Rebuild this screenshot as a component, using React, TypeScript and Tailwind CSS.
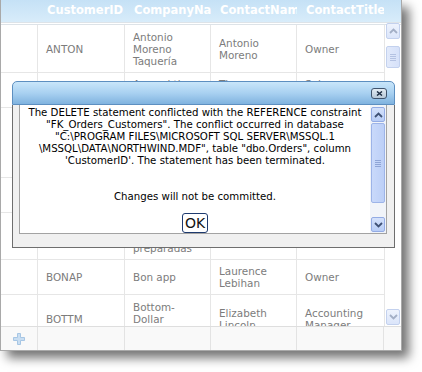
import React from 'react';

const rows = [
    { id: 'ANTON', company: ['Antonio', 'Moreno', 'Taquería'], contact: ['Antonio', 'Moreno'], title: ['Owner'], h: 'h-[48px]' },
    { id: 'AROUT', company: ['Around the', 'Horn'], contact: ['Thomas', 'Hardy'], title: ['Sales', 'Representative'], h: 'h-[35px]' },
    { id: 'BERGS', company: ['Berglunds', 'snabbköp'], contact: ['Christina', 'Berglund'], title: ['Order', 'Administrator'], h: 'h-[70px]' },
    { id: 'BLAUS', company: ['Blauer See', 'Delikatessen'], contact: ['Hanna', 'Moos'], title: ['Sales', 'Representative'], h: 'h-[35px]' },
    { id: 'BOLID', company: ['Bólido', 'Comidas', 'preparadas'], contact: ['Martín', 'Sommer'], title: ['Owner'], h: 'h-[47px]' },
    { id: 'BONAP', company: ['Bon app'], contact: ['Laurence', 'Lebihan'], title: ['Owner'], h: 'h-[35px]' },
    { id: 'BOTTM', company: ['Bottom-', 'Dollar', 'Markets'], contact: ['Elizabeth', 'Lincoln'], title: ['Accounting', 'Manager'], h: 'h-[48px]' },
];

const message = [
    'The DELETE statement conflicted with the REFERENCE constraint',
    '"FK_Orders_Customers". The conflict occurred in database',
    '"C:\\PROGRAM FILES\\MICROSOFT SQL SERVER\\MSSQL.1',
    '\\MSSQL\\DATA\\NORTHWIND.MDF", table "dbo.Orders", column',
    "'CustomerID'. The statement has been terminated.",
];

function Chevron({ up, color }: { up?: boolean; color: string }) {
    return (
        <svg width="9" height="6" viewBox="0 0 9 6">
            <path d={up ? 'M1 5 L4.5 1.5 L8 5' : 'M1 1 L4.5 4.5 L8 1'} fill="none" stroke={color} strokeWidth="1.8" />
        </svg>
    );
}

function Lines({ items }: { items: string[] }) {
    return (
        <div>
            {items.map((t) => (
                <div key={t} className="whitespace-nowrap">{t}</div>
            ))}
        </div>
    );
}

export default function App() {
    return (
        <div className="relative w-[422px] h-[372px] bg-white overflow-hidden font-['DejaVu_Sans',Verdana,sans-serif]">
            {/* Grid */}
            <div className="w-[402px] h-[351px] border-x border-b border-[#a9a9a9] bg-white flex flex-col shadow-[7px_7px_10px_rgba(0,0,0,0.55)]">
                <div className="h-[22px] shrink-0 flex items-center bg-gradient-to-b from-[#c5e1f6] to-[#d8ecfa] text-white font-bold text-[11.5px]">
                    <div className="w-[37px] shrink-0" />
                    <div className="w-[87px] shrink-0 pl-[9px] overflow-hidden whitespace-nowrap">CustomerID</div>
                    <div className="w-[86px] shrink-0 pl-[9px] overflow-hidden whitespace-nowrap">CompanyName</div>
                    <div className="w-[86px] shrink-0 pl-[9px] overflow-hidden whitespace-nowrap">ContactName</div>
                    <div className="w-[87px] shrink-0 pl-[9px] overflow-hidden whitespace-nowrap">ContactTitle</div>
                </div>
                <div className="h-[3px] shrink-0 border-t border-b border-[#dde3e8] bg-white" />

                <div className="h-[301px] shrink-0 flex">
                    <div className="w-[383px] overflow-hidden text-[10.4px] leading-[12px] text-[#7c7c7c]">
                        {rows.map((r) => (
                            <div key={r.id} className={`${r.h} flex border-b border-[#e6e6e6]`}>
                                <div className="w-[36px] shrink-0" />
                                <div className="w-[87px] shrink-0 border-l border-[#e6e6e6] pl-[8px] flex items-center">{r.id}</div>
                                <div className="w-[86px] shrink-0 border-l border-[#e6e6e6] pl-[8px] flex items-center"><Lines items={r.company} /></div>
                                <div className="w-[86px] shrink-0 border-l border-[#e6e6e6] pl-[8px] flex items-center"><Lines items={r.contact} /></div>
                                <div className="w-[87px] shrink-0 border-l border-[#e6e6e6] pl-[8px] flex items-center"><Lines items={r.title} /></div>
                            </div>
                        ))}
                    </div>
                    <div className="w-[17px] shrink-0 border-l border-[#e6e6e6] bg-white flex flex-col items-center">
                        <div className="w-[14px] h-[16px] mt-[-2px] rounded-[2px] border border-[#c3d1ee] bg-gradient-to-b from-[#eef3fd] to-[#dbe5fa] flex items-center justify-center">
                            <Chevron up color="#a3afc6" />
                        </div>
                        <div className="w-[14px] h-[22px] mt-[7px] rounded-[2px] border border-[#c3d1ee] bg-gradient-to-r from-[#e2eafb] to-[#d6e1f9] flex flex-col items-center justify-center gap-[1px]">
                            <div className="w-[6px] h-px bg-[#b4c2e2]" />
                            <div className="w-[6px] h-px bg-[#b4c2e2]" />
                            <div className="w-[6px] h-px bg-[#b4c2e2]" />
                            <div className="w-[6px] h-px bg-[#b4c2e2]" />
                        </div>
                        <div className="flex-1" />
                        <div className="w-[14px] h-[16px] mb-[1px] rounded-[2px] border border-[#c3d1ee] bg-gradient-to-b from-[#eef3fd] to-[#dbe5fa] flex items-center justify-center">
                            <Chevron color="#a3afc6" />
                        </div>
                    </div>
                </div>

                <div className="flex-1 flex border-t border-[#dedede] bg-[#f9f9f9]">
                    <div className="w-[36px] shrink-0 flex items-center justify-center">
                        <svg width="12" height="12" viewBox="0 0 12 12">
                            <path d="M4.5 0.5 H7.5 V4.5 H11.5 V7.5 H7.5 V11.5 H4.5 V7.5 H0.5 V4.5 H4.5 Z" fill="#c9def2" stroke="#a7c6e4" strokeWidth="1" />
                        </svg>
                    </div>
                    <div className="w-[87px] shrink-0 border-l border-[#e3e3e3]" />
                    <div className="w-[86px] shrink-0 border-l border-[#e3e3e3]" />
                    <div className="w-[86px] shrink-0 border-l border-[#e3e3e3]" />
                    <div className="w-[87px] shrink-0 border-l border-[#e3e3e3]" />
                    <div className="flex-1 border-l border-[#e3e3e3]" />
                </div>
            </div>

            {/* Error dialog */}
            <div className="absolute left-[12px] top-[81px] w-[383px] h-[160px] flex flex-col">
                <div className="h-[24px] shrink-0 rounded-t-[5px] border border-[#5d8fc0] bg-gradient-to-b from-[#c9e6fa] via-[#a9d1f1] to-[#80b3df] flex items-center justify-end pr-[7px]">
                    <div className="w-[16px] h-[11px] rounded-[3px] border border-[#3f536d] bg-gradient-to-b from-[#e3ecf4] to-[#b7c8d8] flex items-center justify-center">
                        <svg width="7" height="5" viewBox="0 0 7 5">
                            <path d="M1 0.5 L6 4.5 M6 0.5 L1 4.5" stroke="#1f2f45" strokeWidth="1.5" />
                        </svg>
                    </div>
                </div>
                <div className="flex-1 bg-[#f0f0f0] border-x border-b border-[#6e6e6e] pl-[6px] pr-[7px] pb-[13px]">
                    <div className="h-full bg-white border border-[#a3a3a3] border-t-0 flex">
                        <div className="flex-1 overflow-hidden text-black text-[10.2px] leading-[12px] text-center pt-[2px]">
                            {message.map((l) => (
                                <div key={l} className="whitespace-nowrap">{l}</div>
                            ))}
                            <div className="h-[24px]" />
                            <div>Changes will not be committed.</div>
                            <div className="mt-[10px] flex justify-center">
                                <div className="w-[26px] h-[20px] rounded-[3px] border border-[#1e3a6e] text-[14px] leading-[18px] text-[#111]">OK</div>
                            </div>
                        </div>
                        <div className="w-[16px] shrink-0 bg-[#f1f4f9] flex flex-col items-center pt-[2px]">
                            <div className="w-[14px] h-[15px] rounded-[2px] border border-[#93abe4] bg-gradient-to-b from-[#d4e1fb] to-[#b8cdf6] flex items-center justify-center">
                                <Chevron up color="#3f5175" />
                            </div>
                            <div className="w-[14px] h-[80px] mt-[1px] rounded-[2px] border border-[#9db4e8] bg-gradient-to-r from-[#c9d9fa] to-[#bccff7] flex flex-col items-center justify-center gap-[1px]">
                                <div className="w-[6px] h-px bg-[#8fa5d6]" />
                                <div className="w-[6px] h-px bg-[#8fa5d6]" />
                                <div className="w-[6px] h-px bg-[#8fa5d6]" />
                                <div className="w-[6px] h-px bg-[#8fa5d6]" />
                            </div>
                            <div className="flex-1" />
                            <div className="w-[14px] h-[15px] mb-[1px] rounded-[2px] border border-[#93abe4] bg-gradient-to-b from-[#d4e1fb] to-[#b8cdf6] flex items-center justify-center">
                                <Chevron color="#3f5175" />
                            </div>
                        </div>
                    </div>
                </div>
            </div>
        </div>
    );
}
